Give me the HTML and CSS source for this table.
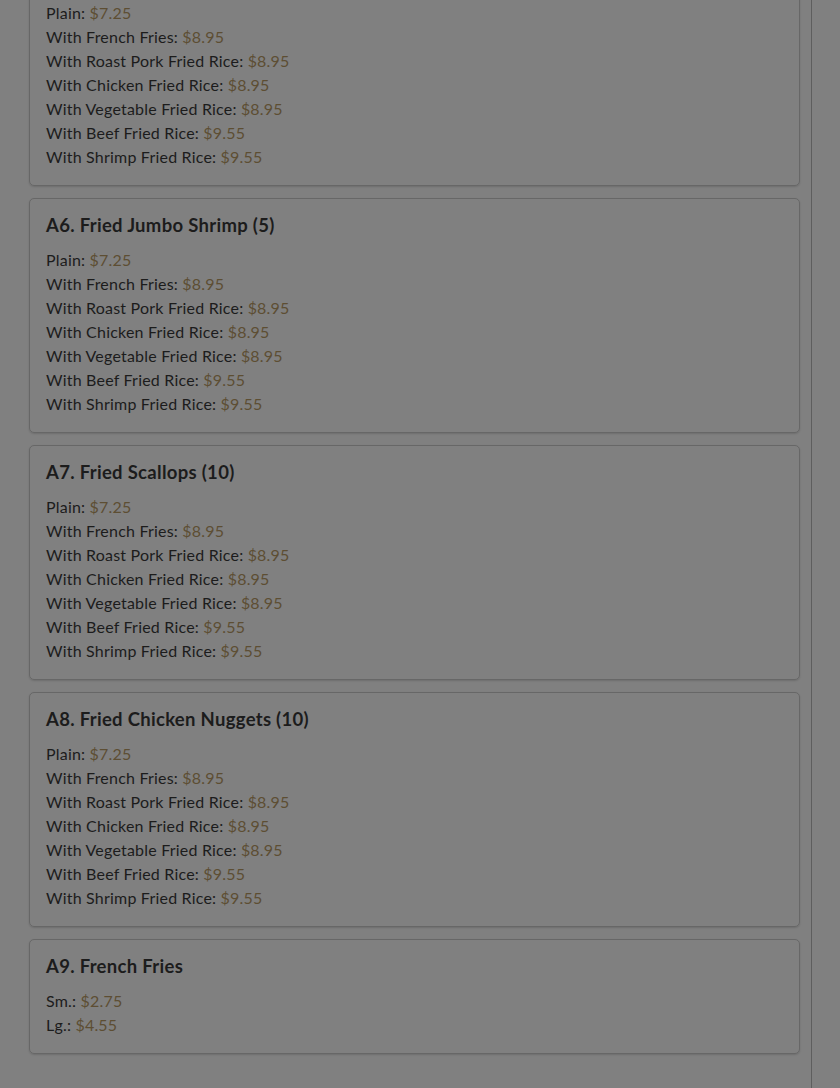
FILE: index.html
```html
<!DOCTYPE html>
<html>
<head>
<meta charset="utf-8">
<link rel="stylesheet" href="styles.css">
</head>
<body>
<div class="page">
  <main class="menu">
    <section class="card">
      <h3 class="title">A5. Fried Fish Fillet (2)</h3>
      <ul class="items">
        <li>Plain: <span class="price">$7.25</span></li>
        <li>With French Fries: <span class="price">$8.95</span></li>
        <li>With Roast Pork Fried Rice: <span class="price">$8.95</span></li>
        <li>With Chicken Fried Rice: <span class="price">$8.95</span></li>
        <li>With Vegetable Fried Rice: <span class="price">$8.95</span></li>
        <li>With Beef Fried Rice: <span class="price">$9.55</span></li>
        <li>With Shrimp Fried Rice: <span class="price">$9.55</span></li>
      </ul>
    </section>
    <section class="card">
      <h3 class="title">A6. Fried Jumbo Shrimp (5)</h3>
      <ul class="items">
        <li>Plain: <span class="price">$7.25</span></li>
        <li>With French Fries: <span class="price">$8.95</span></li>
        <li>With Roast Pork Fried Rice: <span class="price">$8.95</span></li>
        <li>With Chicken Fried Rice: <span class="price">$8.95</span></li>
        <li>With Vegetable Fried Rice: <span class="price">$8.95</span></li>
        <li>With Beef Fried Rice: <span class="price">$9.55</span></li>
        <li>With Shrimp Fried Rice: <span class="price">$9.55</span></li>
      </ul>
    </section>
    <section class="card">
      <h3 class="title">A7. Fried Scallops (10)</h3>
      <ul class="items">
        <li>Plain: <span class="price">$7.25</span></li>
        <li>With French Fries: <span class="price">$8.95</span></li>
        <li>With Roast Pork Fried Rice: <span class="price">$8.95</span></li>
        <li>With Chicken Fried Rice: <span class="price">$8.95</span></li>
        <li>With Vegetable Fried Rice: <span class="price">$8.95</span></li>
        <li>With Beef Fried Rice: <span class="price">$9.55</span></li>
        <li>With Shrimp Fried Rice: <span class="price">$9.55</span></li>
      </ul>
    </section>
    <section class="card">
      <h3 class="title">A8. Fried Chicken Nuggets (10)</h3>
      <ul class="items">
        <li>Plain: <span class="price">$7.25</span></li>
        <li>With French Fries: <span class="price">$8.95</span></li>
        <li>With Roast Pork Fried Rice: <span class="price">$8.95</span></li>
        <li>With Chicken Fried Rice: <span class="price">$8.95</span></li>
        <li>With Vegetable Fried Rice: <span class="price">$8.95</span></li>
        <li>With Beef Fried Rice: <span class="price">$9.55</span></li>
        <li>With Shrimp Fried Rice: <span class="price">$9.55</span></li>
      </ul>
    </section>
    <section class="card">
      <h3 class="title">A9. French Fries</h3>
      <ul class="items">
        <li>Sm.: <span class="price">$2.75</span></li>
        <li>Lg.: <span class="price">$4.55</span></li>
      </ul>
    </section>
  </main>
</div>
</body>
</html>
```

FILE: styles.css
```css
html, body {
  margin: 0;
  padding: 0;
  background: #808080;
  overflow: hidden;
}
body {
  font-family: "Lato", "Noto Sans", sans-serif;
  color: #1c1c1c;
  height: 1088px;
}
.page {
  display: flex;
  flex-direction: column;
  width: 811px;
  height: 1088px;
  border-right: 1px solid #5e5e5e;
  overflow: hidden;
}
.menu {
  display: flex;
  flex-direction: column;
  gap: 12px;
  padding: 0 11px 0 29px;
  margin-top: -49px;
}
.card {
  border: 1px solid #676767;
  border-radius: 5px;
  padding: 15px 16px 16px;
  box-shadow: 0 1px 2px rgba(0,0,0,0.15);
}
.title {
  margin: 0 0 12px;
  font-size: 18.5px;
  line-height: 22px;
  font-weight: 700;
  letter-spacing: 0.3px;
}
.items {
  list-style: none;
  margin: 0;
  padding: 0;
}
.items li {
  font-size: 16px;
  line-height: 24px;
  letter-spacing: 0.2px;
}
.price {
  color: #5d4e33;
}
```
